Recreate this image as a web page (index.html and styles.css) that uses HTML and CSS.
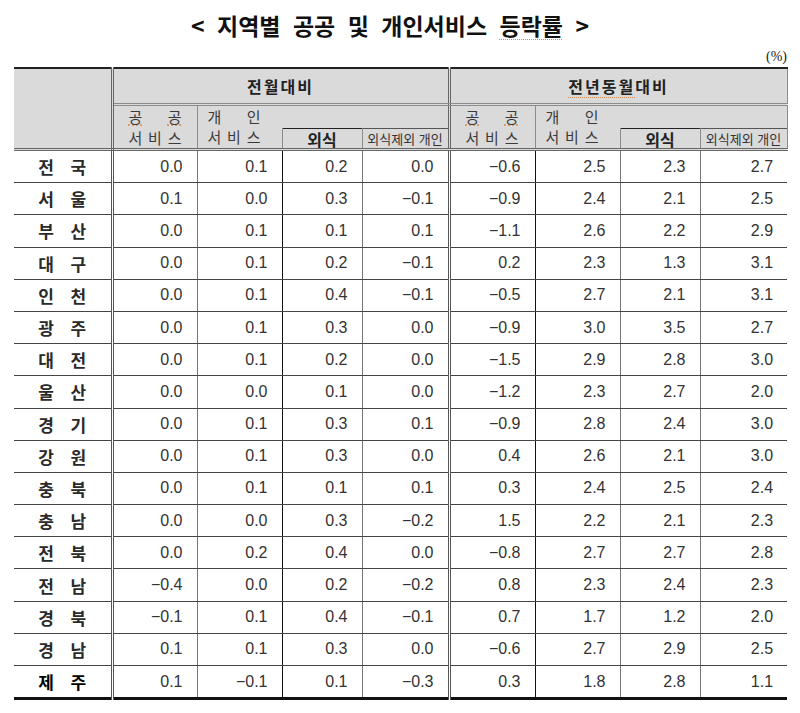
FILE: index.html
```html
<!DOCTYPE html>
<html lang="ko">
<head>
<meta charset="utf-8">
<title>지역별 공공 및 개인서비스 등락률</title>
<link rel="stylesheet" href="styles.css">
</head>
<body>
<h1 class="title">&lt; 지역별 공공 및 개인서비스 <span class="spell">등락률</span> &gt;</h1>
<div class="unit">(%)</div>
<table class="stats">
  <colgroup>
    <col class="c-lbl"><col class="c-a"><col class="c-a"><col class="c-b"><col class="c-c">
    <col class="c-d"><col class="c-a"><col class="c-b"><col class="c-c">
  </colgroup>
  <thead>
    <tr class="h1">
      <th rowspan="3" class="corner"></th>
      <th colspan="4" class="grp dbl-r">전월대비</th>
      <th colspan="4" class="grp"><span class="spell">전년동월</span>대비</th>
    </tr>
    <tr class="h2">
      <th rowspan="2" class="pub"><div class="stack"><div class="sp"><span class="spell-inline">공</span><span class="spell-inline">공</span></div><div class="sp"><span>서</span><span>비</span><span>스</span></div></div></th>
      <th colspan="3" class="priv-top dbl-r"><div class="stack"><div class="sp"><span>개</span><span>인</span></div></div></th>
      <th rowspan="2" class="pub"><div class="stack"><div class="sp"><span class="spell-inline">공</span><span class="spell-inline">공</span></div><div class="sp"><span>서</span><span>비</span><span>스</span></div></div></th>
      <th colspan="3" class="priv-top dark-l"><div class="stack"><div class="sp"><span>개</span><span>인</span></div></div></th>
    </tr>
    <tr class="h3">
      <th class="priv-bot"><div class="stack"><div class="sp"><span>서</span><span>비</span><span>스</span></div></div></th>
      <th class="sub dark-l">외식</th>
      <th class="sub small dbl-r">외식제외 개인</th>
      <th class="priv-bot"><div class="stack"><div class="sp"><span>서</span><span>비</span><span>스</span></div></div></th>
      <th class="sub">외식</th>
      <th class="sub small">외식제외 개인</th>
    </tr>
  </thead>
  <tbody>
    <tr class="first"><td class="lbl">전 국</td><td>0.0</td><td>0.1</td><td>0.2</td><td>0.0</td><td>−0.6</td><td>2.5</td><td>2.3</td><td>2.7</td></tr>
    <tr><td class="lbl">서 울</td><td>0.1</td><td>0.0</td><td>0.3</td><td>−0.1</td><td>−0.9</td><td>2.4</td><td>2.1</td><td>2.5</td></tr>
    <tr><td class="lbl">부 산</td><td>0.0</td><td>0.1</td><td>0.1</td><td>0.1</td><td>−1.1</td><td>2.6</td><td>2.2</td><td>2.9</td></tr>
    <tr><td class="lbl">대 구</td><td>0.0</td><td>0.1</td><td>0.2</td><td>−0.1</td><td>0.2</td><td>2.3</td><td>1.3</td><td>3.1</td></tr>
    <tr><td class="lbl">인 천</td><td>0.0</td><td>0.1</td><td>0.4</td><td>−0.1</td><td>−0.5</td><td>2.7</td><td>2.1</td><td>3.1</td></tr>
    <tr><td class="lbl">광 주</td><td>0.0</td><td>0.1</td><td>0.3</td><td>0.0</td><td>−0.9</td><td>3.0</td><td>3.5</td><td>2.7</td></tr>
    <tr><td class="lbl">대 전</td><td>0.0</td><td>0.1</td><td>0.2</td><td>0.0</td><td>−1.5</td><td>2.9</td><td>2.8</td><td>3.0</td></tr>
    <tr><td class="lbl">울 산</td><td>0.0</td><td>0.0</td><td>0.1</td><td>0.0</td><td>−1.2</td><td>2.3</td><td>2.7</td><td>2.0</td></tr>
    <tr><td class="lbl">경 기</td><td>0.0</td><td>0.1</td><td>0.3</td><td>0.1</td><td>−0.9</td><td>2.8</td><td>2.4</td><td>3.0</td></tr>
    <tr><td class="lbl">강 원</td><td>0.0</td><td>0.1</td><td>0.3</td><td>0.0</td><td>0.4</td><td>2.6</td><td>2.1</td><td>3.0</td></tr>
    <tr><td class="lbl">충 북</td><td>0.0</td><td>0.1</td><td>0.1</td><td>0.1</td><td>0.3</td><td>2.4</td><td>2.5</td><td>2.4</td></tr>
    <tr><td class="lbl">충 남</td><td>0.0</td><td>0.0</td><td>0.3</td><td>−0.2</td><td>1.5</td><td>2.2</td><td>2.1</td><td>2.3</td></tr>
    <tr><td class="lbl">전 북</td><td>0.0</td><td>0.2</td><td>0.4</td><td>0.0</td><td>−0.8</td><td>2.7</td><td>2.7</td><td>2.8</td></tr>
    <tr><td class="lbl">전 남</td><td>−0.4</td><td>0.0</td><td>0.2</td><td>−0.2</td><td>0.8</td><td>2.3</td><td>2.4</td><td>2.3</td></tr>
    <tr><td class="lbl">경 북</td><td>−0.1</td><td>0.1</td><td>0.4</td><td>−0.1</td><td>0.7</td><td>1.7</td><td>1.2</td><td>2.0</td></tr>
    <tr><td class="lbl">경 남</td><td>0.1</td><td>0.1</td><td>0.3</td><td>0.0</td><td>−0.6</td><td>2.7</td><td>2.9</td><td>2.5</td></tr>
    <tr><td class="lbl strong">제 주</td><td>0.1</td><td>−0.1</td><td>0.1</td><td>−0.3</td><td>0.3</td><td>1.8</td><td>2.8</td><td>1.1</td></tr>
  </tbody>
</table>
</body>
</html>
```
FILE: styles.css
```css
body {
  margin: 0;
  background: #ffffff;
  font-family: "Noto Sans CJK KR", "Noto Sans", sans-serif;
  color: #222;
}

.title {
  margin: 0;
  height: 48px;
  line-height: 50px;
  padding-right: 20px;
  text-align: center;
  font-size: 23px;
  font-weight: 700;
  word-spacing: 6px;
  color: #111;
}

.spell {
  text-decoration: underline dotted #d9884a;
  text-underline-offset: 4px;
  text-decoration-thickness: 1px;
}

.spell-inline {
  text-decoration: underline dotted #d9884a;
  text-underline-offset: 2px;
}

.unit {
  width: 787px;
  height: 19px;
  line-height: 17px;
  text-align: right;
  font-family: "Liberation Serif", serif;
  font-size: 14px;
  color: #222;
}

.stats {
  margin-left: 14px;
  width: 773px;
  table-layout: fixed;
  border-collapse: collapse;
  border-top: 2px solid #222;
  border-bottom: 3px solid #111;
}

.c-lbl { width: 98px; }
.c-a { width: 85px; }
.c-b { width: 80px; }
.c-c { width: 87px; }
.c-d { width: 86px; }

.stats thead th {
  background: #dadada;
  border: 1px solid #8c8c8c;
  padding: 0;
  font-weight: 400;
  color: #3a3a3a;
  line-height: 16px;
}

.stats thead th.corner {
  border-left: none;
  border-right: 3px double #666;
  border-bottom: 3px double #666;
}

.h1 th { height: 34px; }
.h2 th { height: 19px; }
.h3 th { height: 18px; }

.grp {
  font-weight: 700 !important;
  font-size: 16px;
  letter-spacing: 2px;
  text-align: center;
  color: #222 !important;
  border-bottom: 3px double #8c8c8c !important;
}

.stats thead th.dbl-r { border-right: 3px double #666; }
.stats thead th.dark-l { border-left-color: #222; }

.stack {
  display: flex;
  flex-direction: column;
  width: 53px;
  font-size: 15px;
}

.sp {
  display: flex;
  justify-content: space-between;
}

.stats thead th.pub {
  text-align: left;
  vertical-align: middle;
  padding-left: 15px;
  line-height: 21px;
  border-bottom: 3px double #666;
}

.stats thead th.priv-top {
  text-align: left;
  vertical-align: top;
  padding: 3px 0 0 10px;
  line-height: 15px;
  border-bottom: none;
}

.stats thead th.priv-bot {
  text-align: left;
  vertical-align: top;
  padding: 1px 0 0 10px;
  line-height: 14px;
  border-top: none;
  border-bottom: 3px double #666;
}

.stats thead th.sub {
  text-align: center;
  font-size: 16px;
  font-weight: 700;
  color: #222;
  border-top: 1px solid #222;
  border-bottom: 3px double #666;
}

.stats thead th.sub.small {
  font-size: 13px;
  font-weight: 400;
  color: #333;
  border-top-color: #555;
}

.stats tbody td {
  height: 31.2px;
  padding: 0 14px 0 0;
  border: 1px solid #444;
  text-align: right;
  font-family: "Liberation Sans", Arial, sans-serif;
  font-size: 16px;
  color: #333;
}

.stats tbody td:nth-child(2),
.stats tbody td:nth-child(4),
.stats tbody td:nth-child(7),
.stats tbody td:nth-child(8) { border-right-color: #777; }

.stats tbody td:nth-child(3),
.stats tbody td:nth-child(5),
.stats tbody td:nth-child(8),
.stats tbody td:nth-child(9) { border-left-color: #777; }

.stats tbody td:nth-child(3) { border-right-color: #111; }
.stats tbody td:nth-child(4) { border-left-color: #111; }
.stats tbody td:nth-child(6) { border-right-color: #111; }
.stats tbody td:nth-child(7) { border-left-color: #111; }

.stats tbody td:nth-child(5) { border-right: 3px double #555; }
.stats tbody td:nth-child(6) { border-left: 3px double #555; }

.stats tbody td:last-child { border-right: none; }

.stats tbody td.lbl {
  padding: 0;
  text-align: center;
  border-left: none;
  border-right: 3px double #555;
  font-family: "Noto Sans CJK KR", sans-serif;
  font-weight: 700;
  font-size: 17px;
  word-spacing: 12px;
  color: #2a2a2a;
}

.stats tbody td.lbl.strong { color: #000; }

.stats tbody tr.first td { border-top: 3px double #666; }
```
